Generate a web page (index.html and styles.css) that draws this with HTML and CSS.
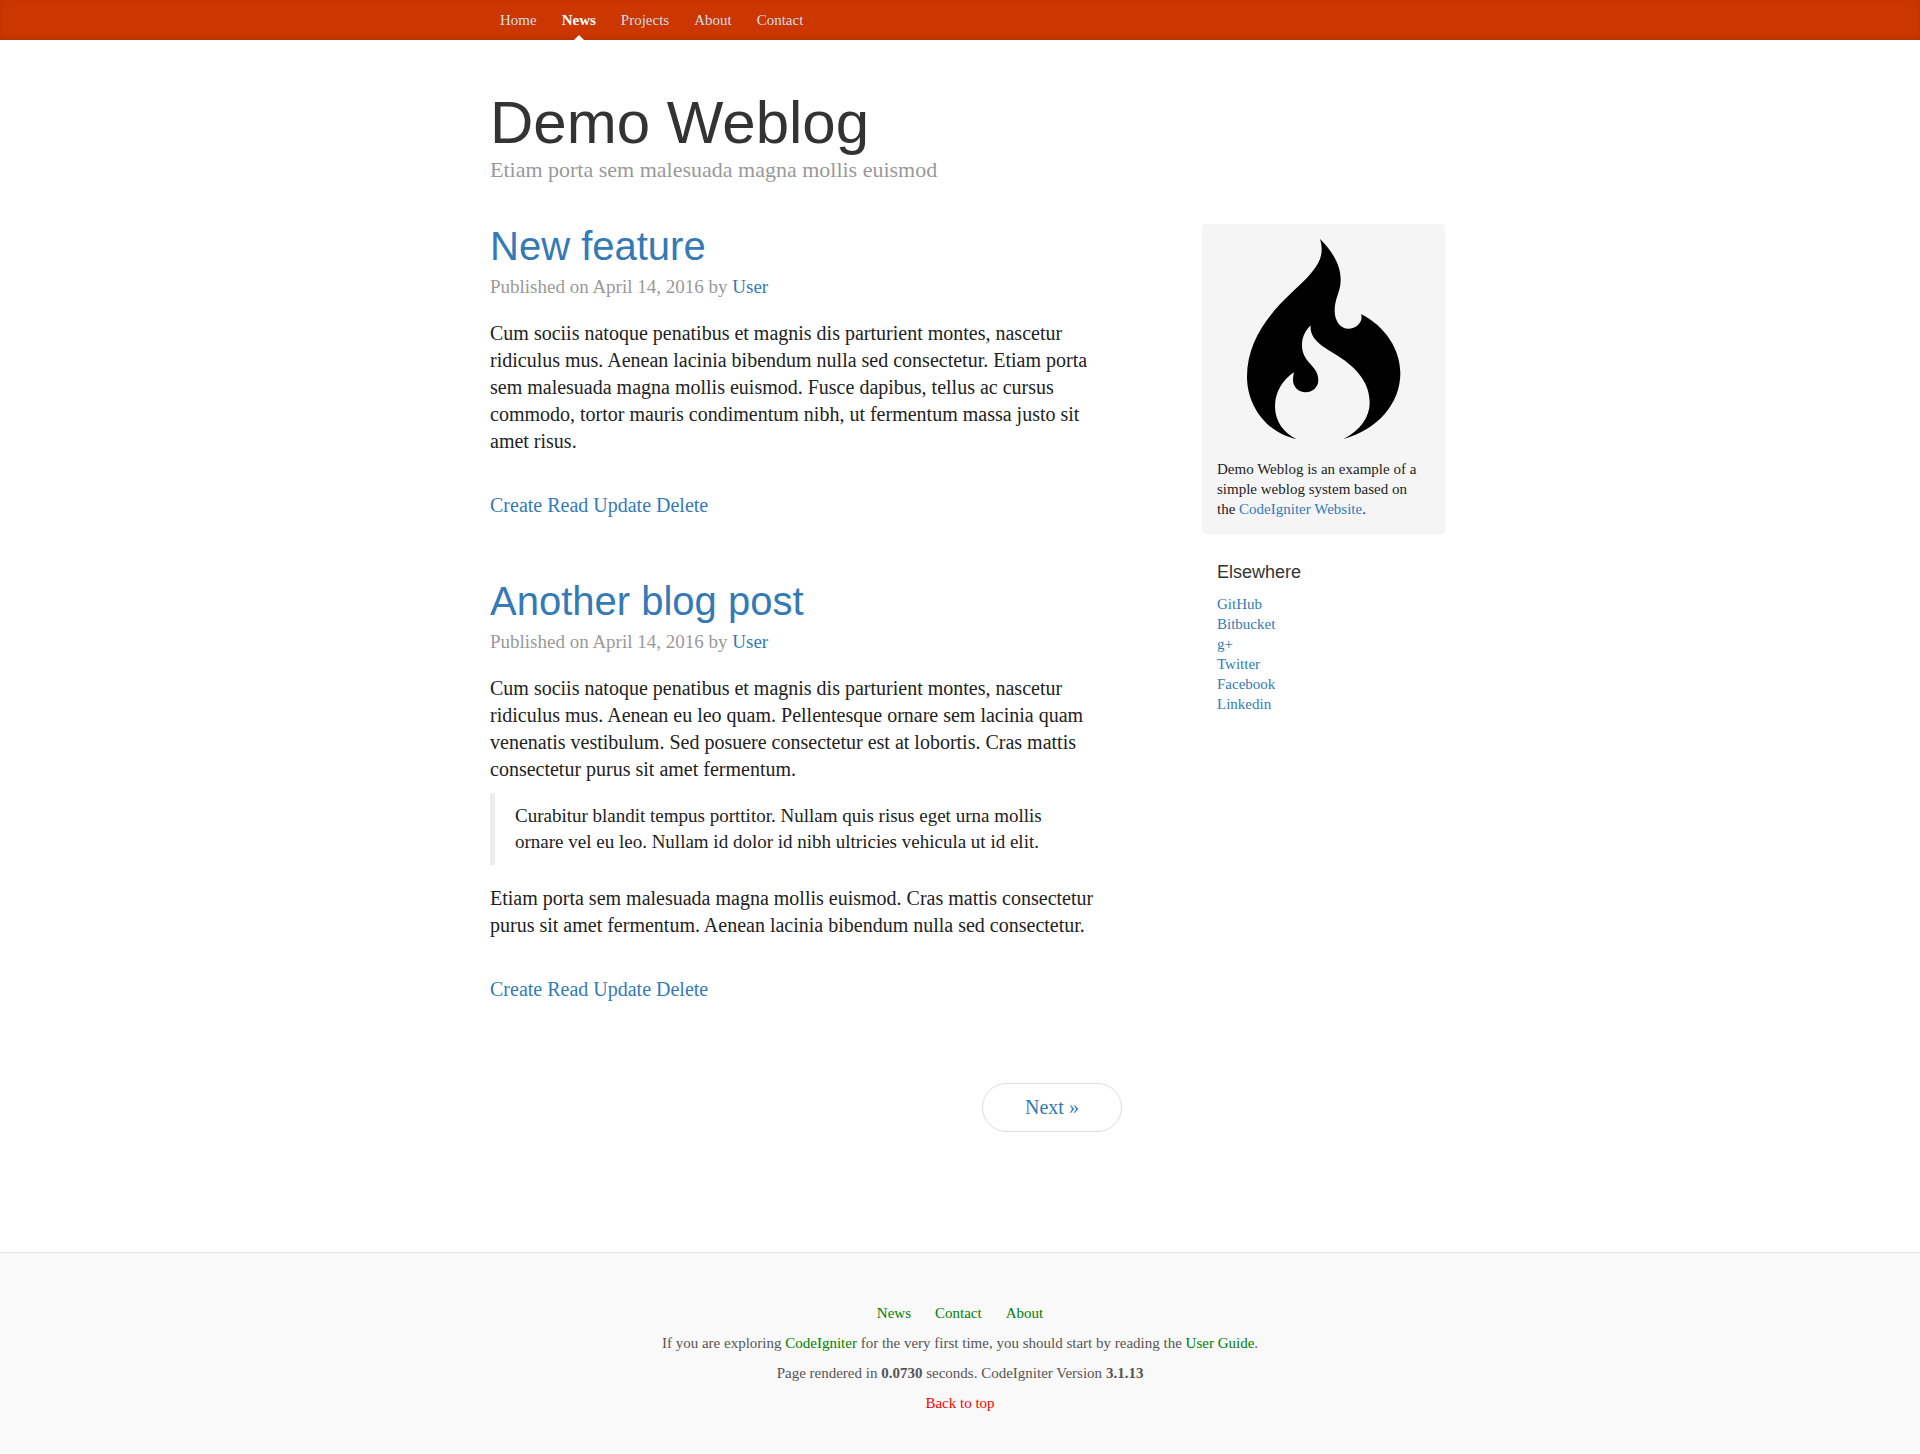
FILE: index.html
```html
<!DOCTYPE html>
<html lang="en">
<head>
<meta charset="utf-8">
<meta name="viewport" content="width=device-width, initial-scale=1">
<title>Demo Weblog</title>
<link rel="stylesheet" href="styles.css">
</head>
<body>
<header class="masthead">
  <nav class="container masthead-nav">
    <a href="#">Home</a>
    <a href="#" class="active">News</a>
    <a href="#">Projects</a>
    <a href="#">About</a>
    <a href="#">Contact</a>
  </nav>
</header>

<div class="container">
  <div class="blog-header">
    <h1>Demo Weblog</h1>
    <p class="lead">Etiam porta sem malesuada magna mollis euismod</p>
  </div>

  <div class="columns">
    <main class="blog-main">
      <article class="post">
        <h2><a href="#">New feature</a></h2>
        <p class="meta">Published on April 14, 2016 by <a href="#">User</a></p>
        <p>Cum sociis natoque penatibus et magnis dis parturient montes, nascetur ridiculus mus. Aenean lacinia bibendum nulla sed consectetur. Etiam porta sem malesuada magna mollis euismod. Fusce dapibus, tellus ac cursus commodo, tortor mauris condimentum nibh, ut fermentum massa justo sit amet risus.</p>
        <div class="actions"><a href="#">Create</a> <a href="#">Read</a> <a href="#">Update</a> <a href="#">Delete</a></div>
      </article>

      <article class="post">
        <h2><a href="#">Another blog post</a></h2>
        <p class="meta">Published on April 14, 2016 by <a href="#">User</a></p>
        <p>Cum sociis natoque penatibus et magnis dis parturient montes, nascetur ridiculus mus. Aenean eu leo quam. Pellentesque ornare sem lacinia quam venenatis vestibulum. Sed posuere consectetur est at lobortis. Cras mattis consectetur purus sit amet fermentum.</p>
        <blockquote>Curabitur blandit tempus porttitor. Nullam quis risus eget urna mollis ornare vel eu leo. Nullam id dolor id nibh ultricies vehicula ut id elit.</blockquote>
        <p>Etiam porta sem malesuada magna mollis euismod. Cras mattis consectetur purus sit amet fermentum. Aenean lacinia bibendum nulla sed consectetur.</p>
        <div class="actions"><a href="#">Create</a> <a href="#">Read</a> <a href="#">Update</a> <a href="#">Delete</a></div>
      </article>

      <nav class="pager"><a href="#">Next »</a></nav>
    </main>

    <aside class="sidebar">
      <section class="about">
        <svg class="flame" viewBox="168 87 462 600" role="img" aria-label="CodeIgniter flame">
          <path d="M387 87C430 130 449 170 449 210C449 245 431 265 431 302C431 335 450 356 472 356C498 356 518 333 510 312C585 350 628 420 628 490C628 580 560 660 457 687C510 660 536 620 536 578C536 520 500 475 440 437C400 412 355 390 359 346C340 365 333 385 333 405C333 460 382 465 382 510C382 532 364 547 344 547C322 547 306 530 306 510C306 500 308 493 309 487C275 510 252 545 252 590C252 635 280 670 317 687C230 670 168 590 168 500C168 400 225 320 300 250C350 203 392 165 392 120C392 105 390 97 387 87Z"/>
        </svg>
        <p>Demo Weblog is an example of a simple weblog system based on the <a href="#">CodeIgniter Website</a>.</p>
      </section>
      <section class="elsewhere">
        <h4>Elsewhere</h4>
        <ul>
          <li><a href="#">GitHub</a></li>
          <li><a href="#">Bitbucket</a></li>
          <li><a href="#">g+</a></li>
          <li><a href="#">Twitter</a></li>
          <li><a href="#">Facebook</a></li>
          <li><a href="#">Linkedin</a></li>
        </ul>
      </section>
    </aside>
  </div>
</div>

<footer class="footer">
  <nav class="footer-nav"><a href="#">News</a><a href="#">Contact</a><a href="#">About</a></nav>
  <p>If you are exploring <a href="#">CodeIgniter</a> for the very first time, you should start by reading the <a href="#">User Guide</a>.</p>
  <p>Page rendered in <strong>0.0730</strong> seconds. CodeIgniter Version <strong>3.1.13</strong></p>
  <p><a href="#" class="top">Back to top</a></p>
</footer>
</body>
</html>
```
FILE: styles.css
```css
* { box-sizing: border-box; }

body {
  margin: 0;
  font: 20px/27px "Liberation Serif", "Times New Roman", serif;
  color: #222;
  background: #fff;
}

h1, h2, h4 {
  margin: 0;
  font-family: "Liberation Sans", Arial, sans-serif;
  font-weight: 400;
  color: #333;
}

p { margin: 0 0 10px; }
a { color: #337ab7; text-decoration: none; }
a:hover { text-decoration: underline; }

.container {
  max-width: 970px;
  margin: 0 auto;
  padding: 0 15px;
}

.masthead {
  background: #cc3700;
  box-shadow: inset 0 -2px 5px rgba(0, 0, 0, .1);
}

.masthead-nav {
  display: flex;
  gap: 5px;
  font-size: 15px;
  line-height: 20px;
}

.masthead-nav a {
  position: relative;
  padding: 10px;
  color: #cdddeb;
}

.masthead-nav .active { color: #fff; font-weight: 700; }

.masthead-nav .active::after {
  content: "";
  position: absolute;
  bottom: 0;
  left: 50%;
  margin-left: -5px;
  border: 5px solid transparent;
  border-top: 0;
  border-bottom-color: #fff;
}

.blog-header { padding: 50px 0 20px; }
.blog-header h1 { font-size: 60px; line-height: 66px; }
.lead { margin-bottom: 20px; font-size: 22px; line-height: 28px; color: #999; }

.columns {
  display: grid;
  grid-template-columns: minmax(0, 616px) 243px;
  justify-content: space-between;
  align-items: start;
  margin-right: -15px;
}

.post { margin-bottom: 60px; }
.post h2 { margin-bottom: 5px; font-size: 40px; line-height: 44px; }
.meta { margin-bottom: 20px; font-size: 19px; color: #999; }
.actions { margin-top: 37px; }

blockquote {
  margin: 0 0 20px;
  padding: 10px 20px;
  border-left: 5px solid #eee;
  font-size: 19px;
  line-height: 26px;
}

.pager {
  display: flex;
  justify-content: flex-end;
  margin: 80px -16px 120px 0;
}

.pager a {
  width: 140px;
  padding: 10px;
  border: 1px solid #ddd;
  border-radius: 25px;
  text-align: center;
}

.sidebar { font-size: 15px; line-height: 20px; }
.about { padding: 15px; border-radius: 4px; background: #f5f5f5; }
.about p { margin: 0 10px 0 0; }
.flame { display: block; width: 154px; height: 200px; margin: 0 auto 20px; }
.elsewhere { padding: 28px 15px 15px; }
.elsewhere h4 { margin-bottom: 12px; font-size: 18px; line-height: 20px; }
.elsewhere ul { margin: 0; padding: 0; list-style: none; }

.footer {
  padding: 50px 0 30px;
  border-top: 1px solid #e5e5e5;
  background: #f9f9f9;
  color: #555;
  font-size: 15px;
  line-height: 20px;
  text-align: center;
}

.footer a { color: #008000; }
.footer .top { color: #f00; }
.footer-nav { display: flex; justify-content: center; gap: 24px; margin-bottom: 10px; }
```
